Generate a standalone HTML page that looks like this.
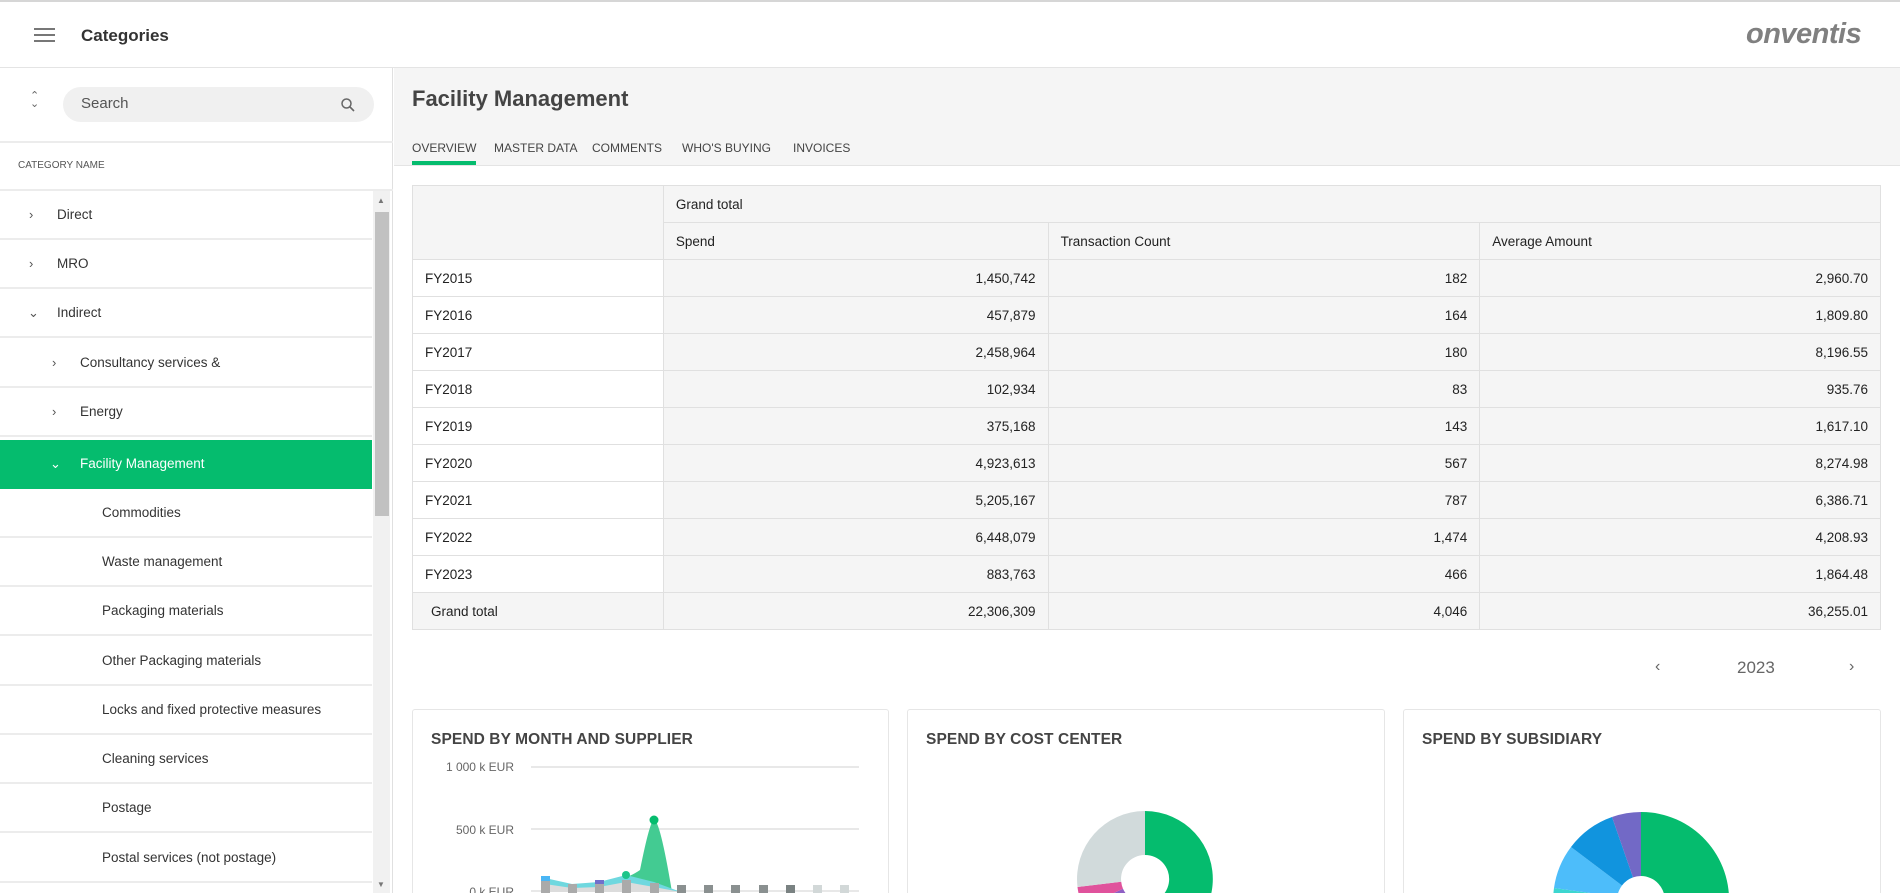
<!DOCTYPE html>
<html><head><meta charset="utf-8"><style>
*{box-sizing:border-box;margin:0;padding:0}
html,body{width:1900px;height:893px;overflow:hidden}
body{background:#fff;font-family:"Liberation Sans",sans-serif;color:#333;position:relative}
.abs{position:absolute}
.hdr{left:0;top:0;width:1900px;height:68px;border-top:2px solid #d6d6d6;border-bottom:1px solid #e4e4e4;background:#fff}
.side{left:0;top:68px;width:393px;height:825px;border-right:1px solid #e0e0e0;background:#fff}
.row{position:absolute;left:0;width:372px;height:49px;border-bottom:2px solid #ececec;font-size:13.5px;line-height:47px;color:#333}
.row.sel{background:#05bc6e;color:#fff;border-bottom:none}
.chev{position:absolute;font-size:13px;color:#555}
.main{left:394px;top:68px;width:1506px;height:98px;background:#f5f5f5;border-bottom:1px solid #e4e4e4}
table{border-collapse:collapse;position:absolute;left:412px;top:185px;width:1469px;font-size:13.5px}
td{height:37px;border:1px solid #e0e0e0;padding:0 12px;color:#222}
td.n{text-align:right;background:#f5f5f5}
.g td{background:#f5f5f5}
.card{position:absolute;top:709px;height:184px;border:1px solid #e6e6e6;border-bottom:none;border-radius:3px 3px 0 0;background:#fff}
.card h3{position:absolute;left:18px;top:21px;font-size:15.5px;font-weight:bold;color:#444;letter-spacing:.1px}
</style></head><body>
<div class="abs hdr">
 <div class="abs" style="left:34px;top:26px;width:21px;height:2px;background:#777;box-shadow:0 6px 0 #777,0 12px 0 #777"></div>
 <div class="abs" style="left:81px;top:24px;font-size:17px;font-weight:bold;color:#333">Categories</div>
 <div class="abs" style="left:1746px;top:16px;font-size:29px;font-weight:bold;font-style:italic;color:#808080;letter-spacing:-0.5px">onventis</div>
</div>
<div class="abs side">
 <div class="abs" style="left:30px;top:24px;font-size:11px;color:#666;line-height:8px">&#8963;<br>&#8964;</div>
 <div class="abs" style="left:63px;top:19px;width:311px;height:35px;border-radius:18px;background:#f0f0f0"></div>
 <div class="abs" style="left:81px;top:27px;font-size:15px;color:#555">Search</div>
 <svg class="abs" style="left:340px;top:29px" width="16" height="16" viewBox="0 0 16 16"><circle cx="6.5" cy="6.5" r="4.5" fill="none" stroke="#666" stroke-width="1.5"/><path d="M10 10l4 4" stroke="#666" stroke-width="1.6"/></svg>
 <div class="abs" style="left:0;top:73px;width:393px;height:2px;background:#ececec"></div>
 <div class="abs" style="left:18px;top:92px;font-size:10px;color:#555">CATEGORY NAME</div>
 <div class="abs" style="left:0;top:121px;width:393px;height:2px;background:#ececec"></div>
 <div class="abs" style="left:373px;top:123px;width:17px;height:702px;background:#f1f1f1"></div>
 <div class="abs" style="left:375px;top:144px;width:14px;height:304px;background:#c1c1c1"></div>
 <div class="abs" style="left:377px;top:128px;font-size:8px;color:#777">&#9650;</div>
 <div class="abs" style="left:377px;top:812px;font-size:8px;color:#777">&#9660;</div>
</div>
<div class="abs" style="left:0;top:191px">
 <div class="row" style="top:0"><span class="chev" style="left:29px">&#8250;</span><span style="position:absolute;left:57px">Direct</span></div>
 <div class="row" style="top:49px"><span class="chev" style="left:29px">&#8250;</span><span style="position:absolute;left:57px">MRO</span></div>
 <div class="row" style="top:98px"><span class="chev" style="left:28px">&#8964;</span><span style="position:absolute;left:57px">Indirect</span></div>
 <div class="row" style="top:148px"><span class="chev" style="left:52px">&#8250;</span><span style="position:absolute;left:80px">Consultancy services &amp;</span></div>
 <div class="row" style="top:197px"><span class="chev" style="left:52px">&#8250;</span><span style="position:absolute;left:80px">Energy</span></div>
 <div class="row sel" style="top:249px"><span class="chev" style="left:50px;color:#fff">&#8964;</span><span style="position:absolute;left:80px">Facility Management</span></div>
 <div class="row" style="top:298px"><span style="position:absolute;left:102px">Commodities</span></div>
 <div class="row" style="top:347px"><span style="position:absolute;left:102px">Waste management</span></div>
 <div class="row" style="top:396px"><span style="position:absolute;left:102px">Packaging materials</span></div>
 <div class="row" style="top:446px"><span style="position:absolute;left:102px">Other Packaging materials</span></div>
 <div class="row" style="top:495px"><span style="position:absolute;left:102px">Locks and fixed protective measures</span></div>
 <div class="row" style="top:544px"><span style="position:absolute;left:102px">Cleaning services</span></div>
 <div class="row" style="top:593px"><span style="position:absolute;left:102px">Postage</span></div>
 <div class="row" style="top:643px"><span style="position:absolute;left:102px">Postal services (not postage)</span></div>
</div>
<div class="abs main">
 <div class="abs" style="left:18px;top:18px;font-size:22px;font-weight:bold;color:#444">Facility Management</div>
 <div class="abs" style="left:18px;top:73px;font-size:12px;color:#444">
  <span style="position:absolute;left:0;white-space:nowrap">OVERVIEW</span>
  <span style="position:absolute;left:82px;white-space:nowrap">MASTER DATA</span>
  <span style="position:absolute;left:180px;white-space:nowrap">COMMENTS</span>
  <span style="position:absolute;left:270px;white-space:nowrap">WHO'S BUYING</span>
  <span style="position:absolute;left:381px;white-space:nowrap">INVOICES</span>
 </div>
 <div class="abs" style="left:18px;top:93px;width:64px;height:4px;background:#05bc6e"></div>
</div>
<table>
<colgroup><col style="width:251px"><col style="width:385px"><col style="width:432px"><col style="width:401px"></colgroup>
<tr class="g"><td rowspan="2"></td><td colspan="3">Grand total</td></tr>
<tr class="g"><td>Spend</td><td>Transaction Count</td><td>Average Amount</td></tr>
<tr><td>FY2015</td><td class="n">1,450,742</td><td class="n">182</td><td class="n">2,960.70</td></tr>
<tr><td>FY2016</td><td class="n">457,879</td><td class="n">164</td><td class="n">1,809.80</td></tr>
<tr><td>FY2017</td><td class="n">2,458,964</td><td class="n">180</td><td class="n">8,196.55</td></tr>
<tr><td>FY2018</td><td class="n">102,934</td><td class="n">83</td><td class="n">935.76</td></tr>
<tr><td>FY2019</td><td class="n">375,168</td><td class="n">143</td><td class="n">1,617.10</td></tr>
<tr><td>FY2020</td><td class="n">4,923,613</td><td class="n">567</td><td class="n">8,274.98</td></tr>
<tr><td>FY2021</td><td class="n">5,205,167</td><td class="n">787</td><td class="n">6,386.71</td></tr>
<tr><td>FY2022</td><td class="n">6,448,079</td><td class="n">1,474</td><td class="n">4,208.93</td></tr>
<tr><td>FY2023</td><td class="n">883,763</td><td class="n">466</td><td class="n">1,864.48</td></tr>
<tr class="g"><td style="padding-left:18px">Grand total</td><td class="n">22,306,309</td><td class="n">4,046</td><td class="n">36,255.01</td></tr>
</table>
<div class="abs" style="left:1655px;top:658px;font-size:16px;color:#666">&#8249;</div>
<div class="abs" style="left:1737px;top:658px;font-size:17px;color:#666">2023</div>
<div class="abs" style="left:1849px;top:658px;font-size:16px;color:#666">&#8250;</div>
<div class="card" style="left:412px;width:477px"><h3>SPEND BY MONTH AND SUPPLIER</h3></div>
<div class="card" style="left:907px;width:478px"><h3>SPEND BY COST CENTER</h3></div>
<div class="card" style="left:1403px;width:478px"><h3>SPEND BY SUBSIDIARY</h3></div>
<svg class="abs" style="left:0;top:0" width="1900" height="893">
 <g font-family="Liberation Sans" font-size="12" fill="#666" text-anchor="end">
  <text x="514" y="771">1 000 k EUR</text><text x="514" y="834">500 k EUR</text><text x="514" y="896">0 k EUR</text>
 </g>
 <g stroke="#e8e8e8" stroke-width="2"><path d="M531 767H859M531 829H859M531 891H859"/></g>
 <path d="M545 880 Q572 890 599 884 Q626 880 640 870 Q650 820 654 820 Q660 820 672 892 L545 892Z" fill="#43cb92"/>
 <path d="M545 878 L572 884 L599 882 L626 875 L654 882 L681 892 L545 892Z" fill="#6fd8df"/>
 <path d="M545 884 L572 888 L599 887 L626 882 L654 887 L681 892 L545 892Z" fill="#dcdcdc"/>
 <circle cx="654" cy="820" r="4.5" fill="#05bc6e"/><circle cx="626" cy="875" r="4" fill="#1cc58a"/>
 <g fill="#aaa"><rect x="541" y="881" width="9" height="12"/><rect x="568" y="884" width="9" height="9"/><rect x="595" y="884" width="9" height="9"/><rect x="622" y="880" width="9" height="13"/><rect x="650" y="883" width="9" height="10"/></g>
 <rect x="541" y="876" width="9" height="5" fill="#4ab6f5"/><rect x="595" y="880" width="9" height="4" fill="#7070cc"/>
 <g fill="#8a9090"><rect x="677" y="885" width="9" height="8"/><rect x="704" y="885" width="9" height="8"/><rect x="731" y="885" width="9" height="8"/><rect x="759" y="885" width="9" height="8"/><rect x="786" y="885" width="9" height="8" fill="#7a8282"/></g>
 <g fill="#d2d8d8"><rect x="813" y="885" width="9" height="8"/><rect x="840" y="885" width="9" height="8"/></g>
 <g transform="translate(1145 879)">
  <path d="M0 -68 A68 68 0 1 1 -11.8 67 L-4.2 23.6 A24 24 0 1 0 0 -24Z" fill="#05bc6e"/>
  <path d="M-11.8 67 A68 68 0 0 1 -40 55 L-14 19.4 A24 24 0 0 0 -4.2 23.6Z" fill="#1098e0"/>
  <path d="M-40 55 A68 68 0 0 1 -62 28 L-22 9.8 A24 24 0 0 0 -14 19.4Z" fill="#8e5fc4"/>
  <path d="M-62 28 A68 68 0 0 1 -67.5 8 L-23.8 2.8 A24 24 0 0 0 -22 9.8Z" fill="#e0529c"/>
  <path d="M-67.5 8 A68 68 0 0 1 0 -68 L0 -24 A24 24 0 0 0 -23.8 2.8Z" fill="#d1dadb"/>
 </g>
 <g transform="translate(1641 900)">
  <path d="M0 -88 A88 88 0 1 1 -15 86.7 L-4 23.7 A24 24 0 1 0 0 -24Z" fill="#05bc6e"/>
  <path d="M-15 86.7 A88 88 0 0 1 -87 -12 L-23.7 -3.3 A24 24 0 0 0 -4 23.7Z" fill="#3dd6d0"/>
  <path d="M-87 -12 A88 88 0 0 1 -70 -53 L-19 -14.5 A24 24 0 0 0 -23.7 -3.3Z" fill="#4dbdfa"/>
  <path d="M-70 -53 A88 88 0 0 1 -29 -83 L-8 -22.6 A24 24 0 0 0 -19 -14.5Z" fill="#1194de"/>
  <path d="M-29 -83 A88 88 0 0 1 0 -88 L0 -24 A24 24 0 0 0 -8 -22.6Z" fill="#7269c6"/>
 </g>
</svg>
</body></html>
